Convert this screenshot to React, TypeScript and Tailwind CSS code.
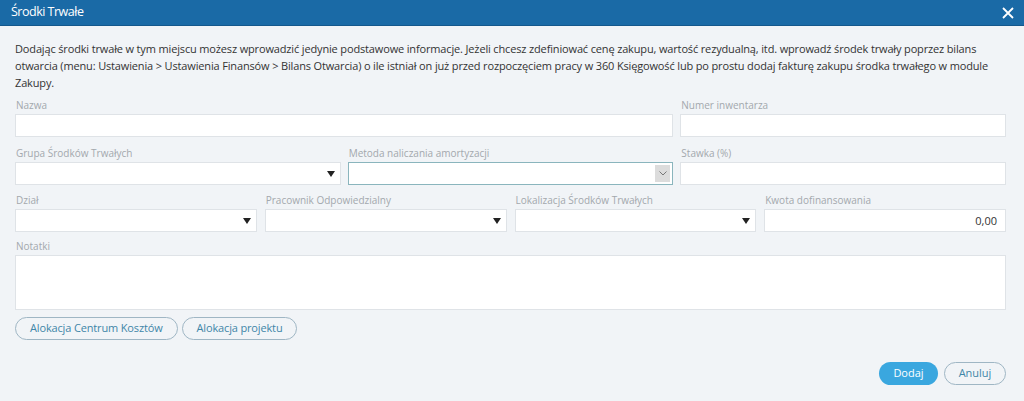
import React from "react";

const font = { fontFamily: '"Open Sans", "Noto Sans", sans-serif' };

const Label: React.FC<{ text: string }> = ({ text }) => (
  <div className="text-[10px] leading-[12px] text-[#a3a8ad] mb-[3px] pl-[1px]">{text}</div>
);

const Caret = () => (
  <svg className="absolute right-[5px] top-[8px]" width="8" height="6" viewBox="0 0 8 6">
    <path d="M0 0H8L4 6Z" fill="#222" />
  </svg>
);

const Input: React.FC<{ label: string; select?: boolean; value?: string }> = ({ label, select, value }) => (
  <div className="flex flex-col">
    <Label text={label} />
    <div className="relative h-[23px] bg-white border border-[#dfe3e7] text-[11px] text-[#333] text-right pr-[8px] leading-[21px]">
      {value}
      {select && <Caret />}
    </div>
  </div>
);

export default function App() {
  return (
    <div className="w-[1024px] h-[401px] bg-[#f1f4f7] overflow-hidden" style={font}>
      <div className="h-[26px] bg-[#1a6aa6] border-b border-[#14588c] flex items-center justify-between pl-[11px] pr-[10px]">
        <span className="text-white text-[12.5px] tracking-[-0.5px] leading-none">Środki Trwałe</span>
        <svg width="12" height="12" viewBox="0 0 12 12">
          <path d="M1 1L11 11M11 1L1 11" stroke="white" strokeWidth="1.8" />
        </svg>
      </div>

      <div className="pl-[15px] pr-[18px]">
        <p className="mt-[14px] text-[11px] tracking-[-0.15px] leading-[17px] text-[#333]">
          Dodając środki trwałe w tym miejscu możesz wprowadzić jedynie podstawowe informacje. Jeżeli chcesz zdefiniować cenę zakupu, wartość rezydualną, itd. wprowadź środek trwały poprzez bilans otwarcia (menu: Ustawienia &gt; Ustawienia Finansów &gt; Bilans Otwarcia) o ile istniał on już przed rozpoczęciem pracy w 360 Księgowość lub po prostu dodaj fakturę zakupu środka trwałego w module Zakupy.
        </p>

        <div className="grid grid-cols-3 gap-x-[7px] mt-[8px]">
          <div className="col-span-2">
            <Input label="Nazwa" />
          </div>
          <Input label="Numer inwentarza" />
        </div>

        <div className="grid grid-cols-3 gap-x-[7px] mt-[10px]">
          <Input label="Grupa Środków Trwałych" select />
          <div className="flex flex-col">
            <Label text="Metoda naliczania amortyzacji" />
            <div className="relative h-[23px] bg-white border border-[#8ab5bd]">
              <div className="absolute right-[2px] top-[2px] bottom-[2px] w-[15px] bg-[#dcdcdc] flex items-center justify-center">
                <svg width="8" height="5" viewBox="0 0 8 5">
                  <path d="M0.5 0.5L4 4L7.5 0.5" stroke="#777" strokeWidth="1" fill="none" />
                </svg>
              </div>
            </div>
          </div>
          <Input label="Stawka (%)" />
        </div>

        <div className="grid grid-cols-4 gap-x-[8px] mt-[9px]">
          <Input label="Dział" select />
          <Input label="Pracownik Odpowiedzialny" select />
          <Input label="Lokalizacja Środków Trwałych" select />
          <Input label="Kwota dofinansowania" value="0,00" />
        </div>

        <div className="mt-[8px]">
          <Label text="Notatki" />
          <div className="h-[55px] bg-white border border-[#dfe3e7]" />
        </div>

        <div className="flex gap-[4px] mt-[7px]">
          <button className="h-[23px] px-[14px] rounded-full border border-[#9fb6c4] text-[11px] tracking-[-0.15px] text-[#3f86a8]">
            Alokacja Centrum Kosztów
          </button>
          <button className="h-[23px] px-[14px] rounded-full border border-[#9fb6c4] text-[11px] tracking-[-0.15px] text-[#3f86a8]">
            Alokacja projektu
          </button>
        </div>

        <div className="flex justify-end gap-[6px] mt-[22px]">
          <button className="h-[23px] w-[59px] rounded-full bg-[#3aa7df] text-white text-[11px]">Dodaj</button>
          <button className="h-[23px] w-[62px] rounded-full border border-[#9fb6c4] text-[11px] text-[#3f86a8]">Anuluj</button>
        </div>
      </div>
    </div>
  );
}
